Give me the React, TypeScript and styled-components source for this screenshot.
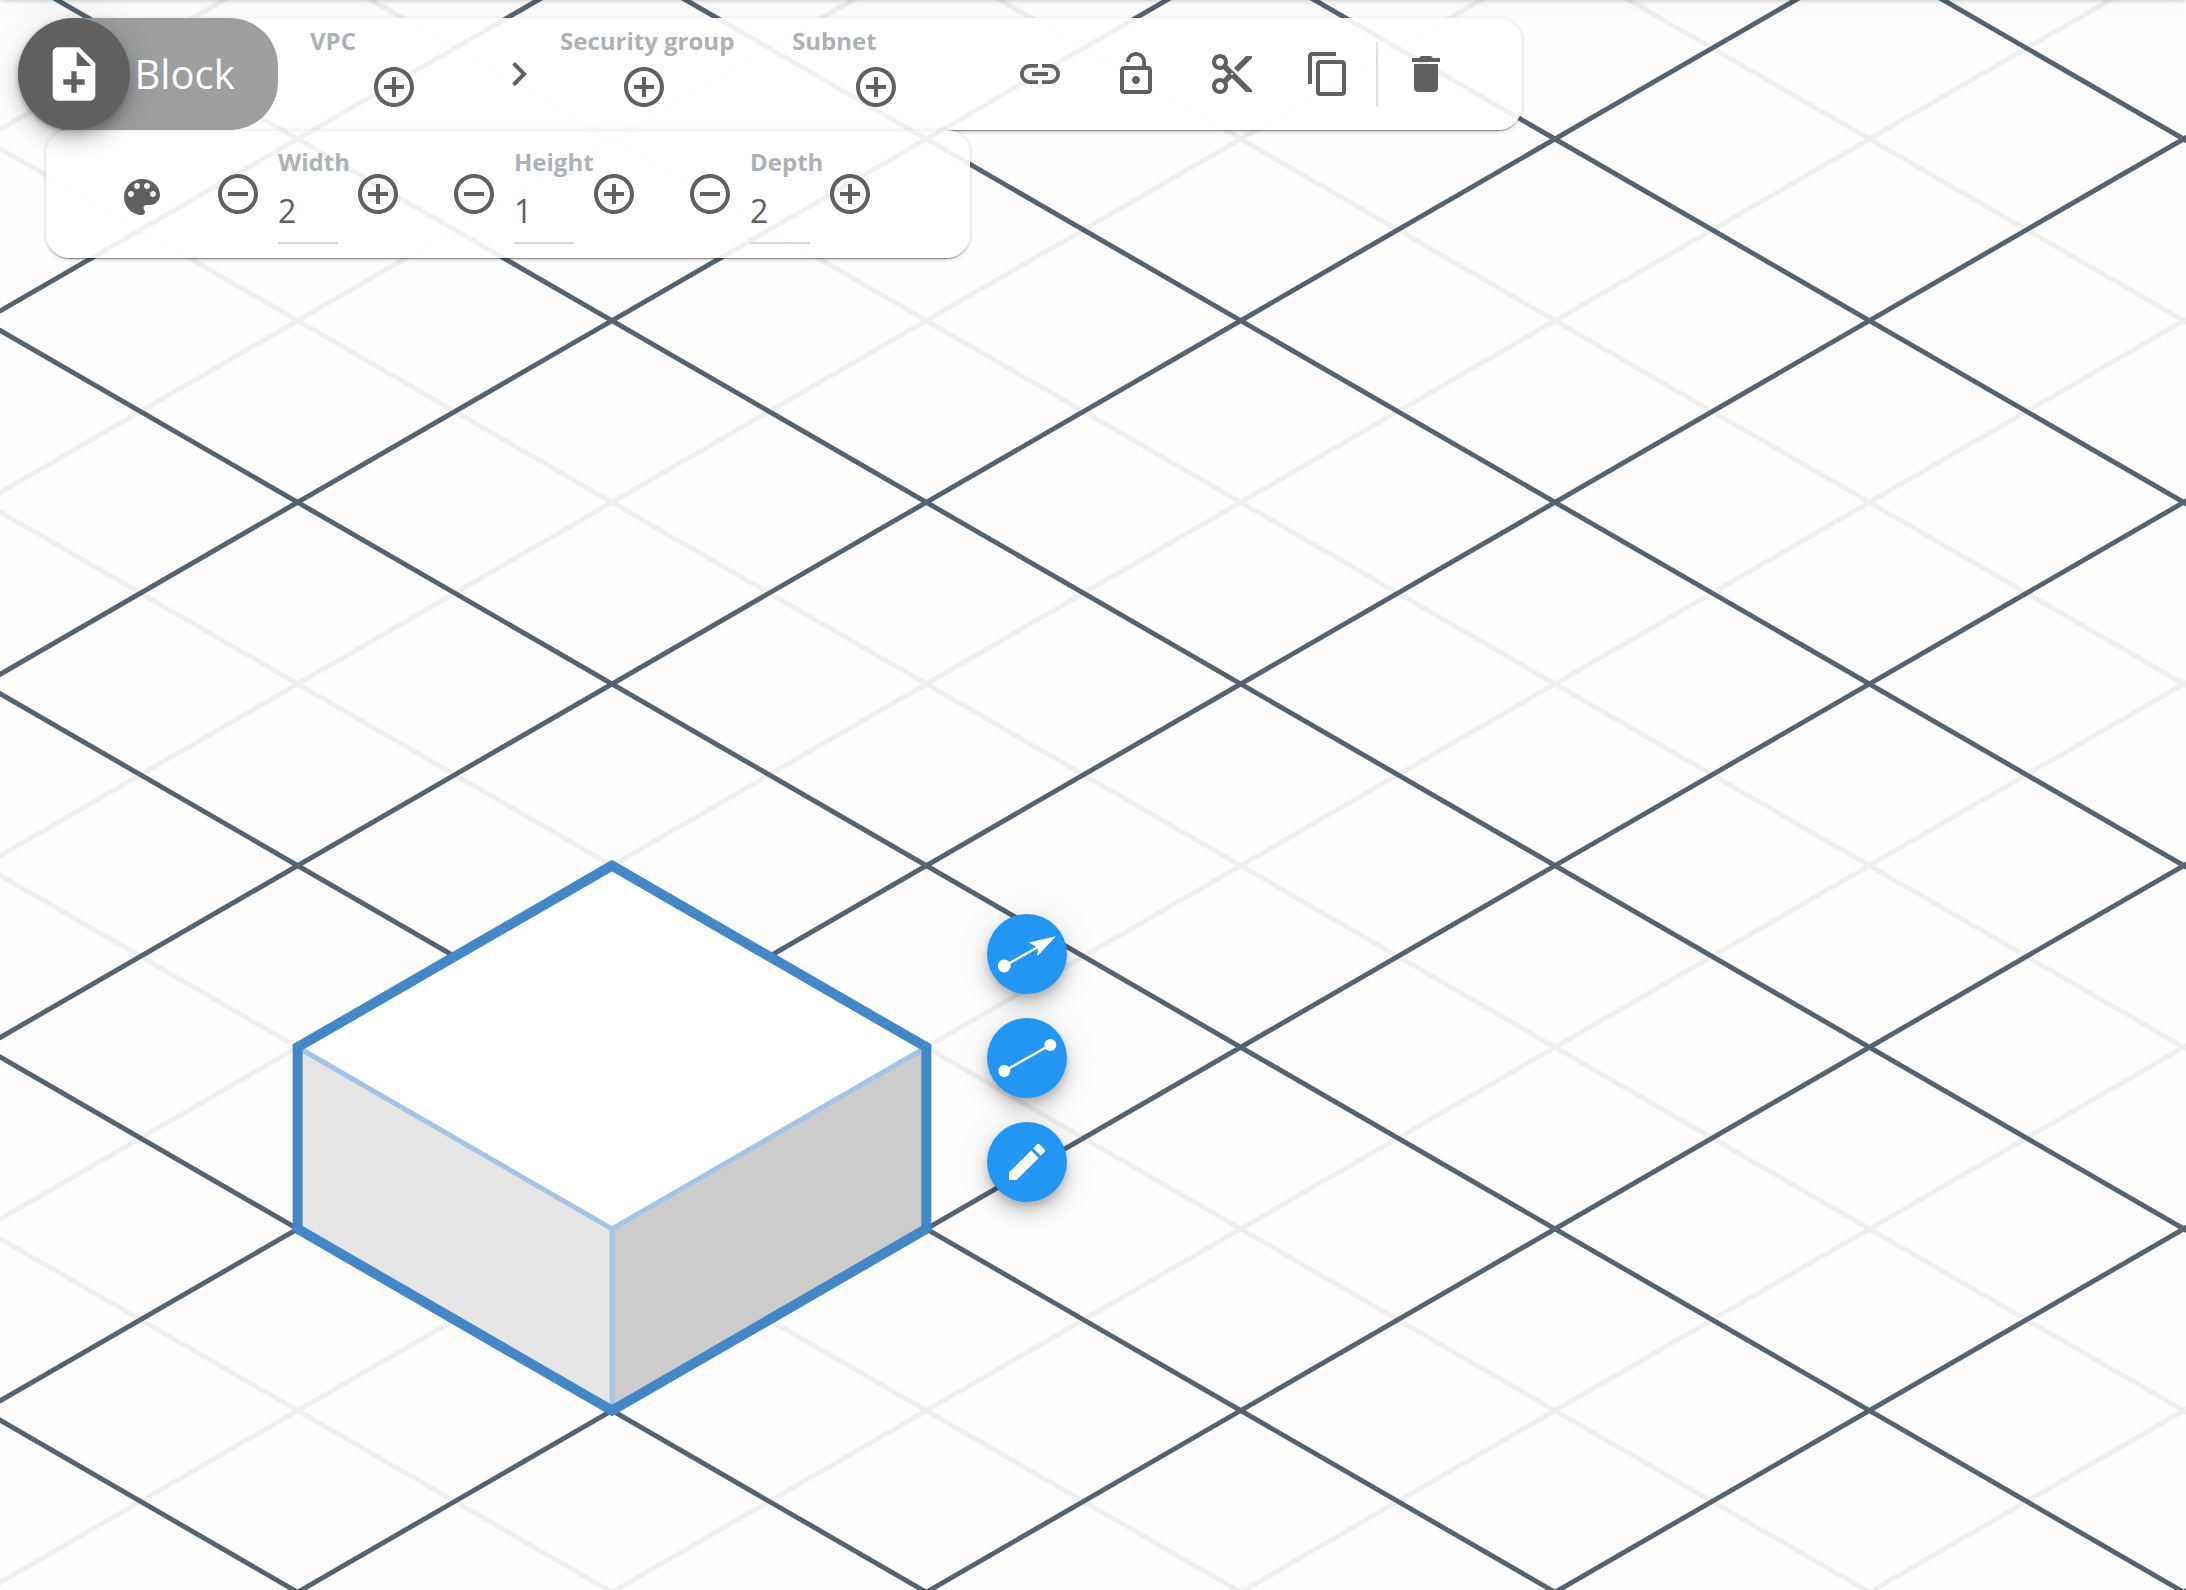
import React from 'react';
import styled, { createGlobalStyle } from 'styled-components';
import {
  MdNoteAdd, MdAddCircleOutline, MdRemoveCircleOutline, MdChevronRight, MdLink, MdLockOpen,
  MdContentCut, MdContentCopy, MdDelete, MdEdit,
} from 'react-icons/md';

const VIEW_W = 2186;
const VIEW_H = 1590;
const TILE_W = 314.35;
const TILE_H = 181.65;
const ORIGIN_X = 297.65;
const ORIGIN_Y = 502.3;

const GlobalStyle = createGlobalStyle`
  * { box-sizing: border-box; }
  body {
    margin: 0;
    background: #fefefe;
    font-family: "Open Sans", "Noto Sans", sans-serif;
    color: #606060;
  }
`;

const Page = styled.main`
  position: relative;
  width: ${VIEW_W}px;
  height: ${VIEW_H}px;
  overflow: hidden;
`;

const Canvas = styled.svg`
  position: absolute;
  inset: 0;
  display: block;
`;

const HeaderShadow = styled.div`
  position: absolute;
  top: -10px;
  left: 0;
  right: 0;
  height: 10px;
  box-shadow: 0 1px 4px rgba(0, 0, 0, 0.18), 0 4px 20px rgba(0, 0, 0, 0.06);
`;

const Toolbars = styled.div`
  position: relative;
  display: flex;
  flex-direction: column;
  align-items: flex-start;
  padding: 18px;
`;

const Panel = styled.div`
  display: flex;
  align-items: center;
  background: rgba(255, 255, 255, 0.9);
  box-shadow: 0 2px 1px -1px rgba(0, 0, 0, 0.4), 0 2px 4px rgba(0, 0, 0, 0.16), 0 0 6px rgba(0, 0, 0, 0.06);
`;

const MainBar = styled(Panel)`
  width: 1504px;
  height: 112px;
  border-radius: 56px 24px 24px 56px;
`;

const SizeBar = styled(Panel)`
  width: 924px;
  height: 128px;
  margin-left: 28px;
  padding-left: 72px;
  border-radius: 24px;
`;

const NamePill = styled.div`
  position: relative;
  z-index: 1;
  display: flex;
  align-items: center;
  width: 260px;
  height: 112px;
  border-radius: 56px 48px 48px 56px;
  background: #9d9ea0;
  color: #fff;
  font-size: 40px;
  line-height: 54px;
`;

const floatShadow = `0 6px 10px -2px rgba(0, 0, 0, 0.2), 0 12px 20px rgba(0, 0, 0, 0.14), 0 2px 36px rgba(0, 0, 0, 0.12)`;

const NameBadge = styled.div`
  display: flex;
  align-items: center;
  justify-content: center;
  width: 112px;
  height: 112px;
  margin-right: 4.5px;
  border-radius: 50%;
  background: #606060;
  box-shadow: ${floatShadow};
`;

const Field = styled.div<{ $w: number }>`
  display: flex;
  flex-direction: column;
  align-items: flex-start;
  width: ${(p) => p.$w}px;
  height: 112px;
  padding-top: 7px;
`;

const Label = styled.span`
  height: 32px;
  color: #adb1b5;
  font-size: 24px;
  font-weight: 700;
  line-height: 32px;
  white-space: nowrap;
`;

const FieldAction = styled.div`
  display: flex;
  justify-content: center;
  width: 168px;
  padding-top: 6px;
`;

const IconSlot = styled.div<{ $w?: number; $down?: number }>`
  display: flex;
  flex: none;
  align-items: center;
  justify-content: center;
  width: ${(p) => p.$w ?? 96}px;
  padding-top: ${(p) => p.$down ?? 0}px;
`;

const Divider = styled.div`
  width: 2px;
  height: 64px;
  background: #dedede;
`;

const Stepper = styled.div`
  display: flex;
  align-items: center;
  width: 236px;
  height: 128px;
`;

const StepperValue = styled.div`
  display: flex;
  flex-direction: column;
  width: 76px;
  height: 128px;
  margin-left: 8px;
  padding-top: 16px;
`;

const ValueBox = styled.div`
  width: 60px;
  height: 66px;
  padding-top: 11px;
  border-bottom: 2px solid #d8d8d8;
  font-size: 32px;
  line-height: 44px;
`;

const Actions = styled.div`
  position: absolute;
  left: 987px;
  top: 914px;
  display: flex;
  flex-direction: column;
  gap: 24px;
`;

const ActionButton = styled.button`
  display: flex;
  align-items: center;
  justify-content: center;
  width: 80px;
  height: 80px;
  padding: 0;
  border: 0;
  border-radius: 50%;
  background: #2396f3;
  color: #fff;
  box-shadow: ${floatShadow};
`;

const vertex = (u: number, v: number) => [ORIGIN_X + u * TILE_W, ORIGIN_Y + v * TILE_H];

function gridPath(parity: number) {
  const parts: string[] = [];
  for (let k = -10; k <= 18; k++) {
    if (Math.abs(k % 2) !== parity) continue;
    const [ax, ay] = vertex(-2, k + 2);
    const [bx, by] = vertex(8, k - 8);
    const [cx, cy] = vertex(-2, k - 2);
    const [dx, dy] = vertex(8, k + 8);
    parts.push(`M${ax} ${ay}L${bx} ${by}M${cx} ${cy}L${dx} ${dy}`);
  }
  return parts.join('');
}

function Scene() {
  const pts = (list: number[][]) => list.map(([u, v]) => vertex(u, v).join(',')).join(' ');
  return (
    <Canvas width={VIEW_W} height={VIEW_H} fill="none">
      <path d={gridPath(1)} stroke="#efefef" strokeWidth="5" />
      <path d={gridPath(0)} stroke="#556370" strokeWidth="4.9" />
      <polygon points={pts([[0, 3], [1, 2], [2, 3], [1, 4]])} fill="#fff" />
      <polygon points={pts([[0, 3], [1, 4], [1, 5], [0, 4]])} fill="#e6e6e6" />
      <polygon points={pts([[2, 3], [1, 4], [1, 5], [2, 4]])} fill="#ccc" />
      <polyline points={pts([[0, 3], [1, 4], [2, 3]])} stroke="#a3c4e5" strokeWidth="5" />
      <polyline points={pts([[1, 4], [1, 5]])} stroke="#a3c4e5" strokeWidth="5" />
      <polygon
        points={pts([[1, 2], [2, 3], [2, 4], [1, 5], [0, 4], [0, 3]])}
        stroke="#4487c7"
        strokeWidth="10"
      />
    </Canvas>
  );
}

function PaletteIcon() {
  return (
    <svg width="48" height="48" viewBox="0 0 24 24" fill="currentColor">
      <path d="M12 3c-4.97 0-9 4.03-9 9s4.03 9 9 9c.83 0 1.5-.67 1.5-1.5 0-.39-.15-.74-.39-1.01-.23-.26-.38-.61-.38-.99 0-.83.67-1.5 1.5-1.5H16c2.76 0 5-2.24 5-5 0-4.42-4.03-8-9-8zm-5.5 9c-.83 0-1.5-.67-1.5-1.5S5.67 9 6.5 9 8 9.67 8 10.5 7.33 12 6.5 12zm3-4C8.67 8 8 7.33 8 6.5S8.67 5 9.5 5s1.5.67 1.5 1.5S10.33 8 9.5 8zm5 0c-.83 0-1.5-.67-1.5-1.5S13.67 5 14.5 5s1.5.67 1.5 1.5S15.33 8 14.5 8zm3 4c-.83 0-1.5-.67-1.5-1.5S16.67 9 17.5 9s1.5.67 1.5 1.5-.67 1.5-1.5 1.5z" />
    </svg>
  );
}

function ArrowIcon() {
  return (
    <svg width="80" height="80" viewBox="0 0 80 80" fill="#fff">
      <circle cx="17.3" cy="52" r="6.4" />
      <path d="M17.3 52L53 32" stroke="#fff" strokeWidth="2.4" />
      <path d="M69 22.3L50.3 42.2L51 34L42 28.4Z" />
    </svg>
  );
}

function LineIcon() {
  return (
    <svg width="80" height="80" viewBox="0 0 80 80" fill="#fff">
      <circle cx="17.3" cy="53" r="6" />
      <circle cx="63.3" cy="27" r="6" />
      <path d="M17.3 53L63.3 27" stroke="#fff" strokeWidth="2.4" />
    </svg>
  );
}

function GroupField({ label, width }: { label: string; width: number }) {
  return (
    <Field $w={width}>
      <Label>{label}</Label>
      <FieldAction>
        <MdAddCircleOutline size={48} />
      </FieldAction>
    </Field>
  );
}

function SizeStepper({ label, value }: { label: string; value: number }) {
  return (
    <Stepper>
      <IconSlot $w={64}><MdRemoveCircleOutline size={48} /></IconSlot>
      <StepperValue>
        <Label>{label}</Label>
        <ValueBox>{value}</ValueBox>
      </StepperValue>
      <IconSlot $w={48}><MdAddCircleOutline size={48} /></IconSlot>
    </Stepper>
  );
}

export default function App() {
  return (
    <Page>
      <GlobalStyle />
      <Scene />
      <HeaderShadow />
      <Toolbars>
        <MainBar>
          <NamePill>
            <NameBadge><MdNoteAdd size={64} /></NameBadge>
            Block
          </NamePill>
          <IconSlot $w={32} />
          <GroupField label="VPC" width={168} />
          <IconSlot $w={82}><MdChevronRight size={48} /></IconSlot>
          <GroupField label="Security group" width={232} />
          <GroupField label="Subnet" width={200} />
          <IconSlot><MdLink size={48} /></IconSlot>
          <IconSlot><MdLockOpen size={48} /></IconSlot>
          <IconSlot><MdContentCut size={48} /></IconSlot>
          <IconSlot><MdContentCopy size={48} /></IconSlot>
          <Divider />
          <IconSlot><MdDelete size={48} /></IconSlot>
        </MainBar>
        <SizeBar>
          <IconSlot $w={48} $down={6}><PaletteIcon /></IconSlot>
          <IconSlot $w={40} />
          <SizeStepper label="Width" value={2} />
          <SizeStepper label="Height" value={1} />
          <SizeStepper label="Depth" value={2} />
        </SizeBar>
      </Toolbars>
      <Actions>
        <ActionButton><ArrowIcon /></ActionButton>
        <ActionButton><LineIcon /></ActionButton>
        <ActionButton><MdEdit size={48} /></ActionButton>
      </Actions>
    </Page>
  );
}
